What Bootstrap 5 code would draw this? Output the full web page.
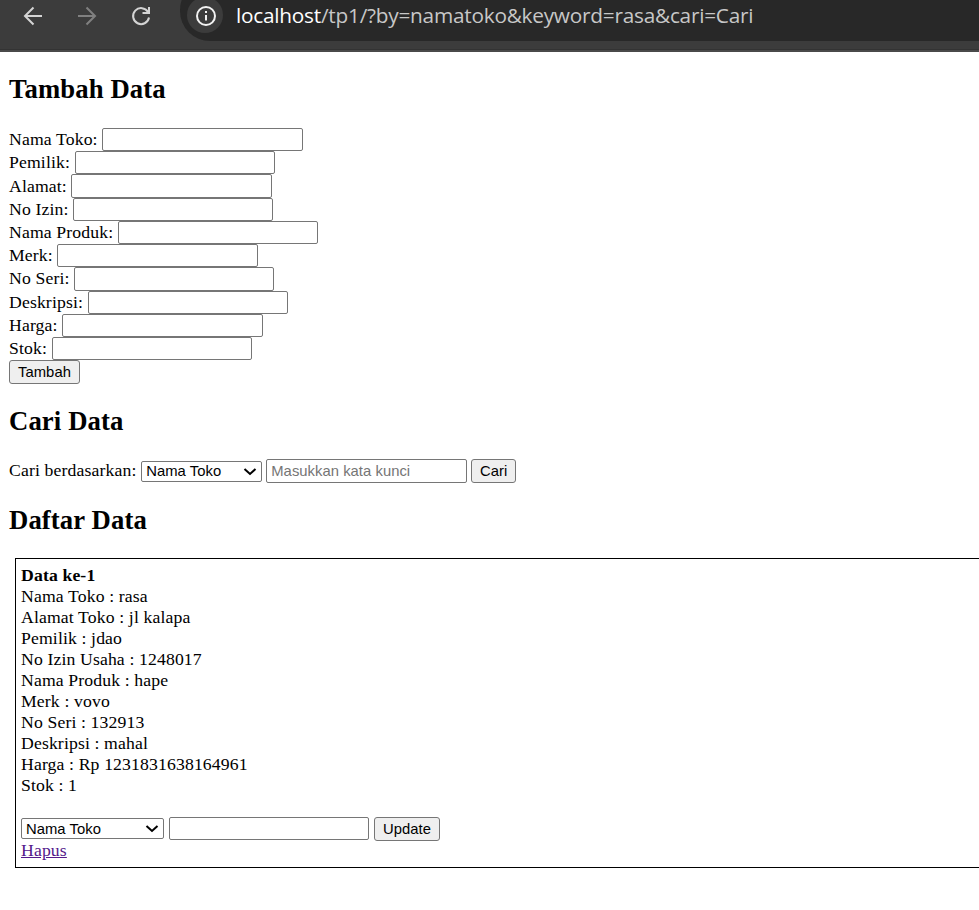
<!DOCTYPE html>
<html lang="id">
<head>
<meta charset="utf-8">
<meta name="viewport" content="width=device-width, initial-scale=1">
<title>Data Toko</title>
<link href="https://cdn.jsdelivr.net/npm/bootstrap@5.3.0/dist/css/bootstrap.min.css" rel="stylesheet">
<style>
body{font-family:"Liberation Serif","Times New Roman",serif;font-size:17.7px;letter-spacing:.13px;line-height:21px;color:#000;background:#fff}
.browser-bar{height:52px;background:#3c3c3c;border-bottom:2px solid #4a4a4a;box-shadow:inset 0 -1px #333}
.nav-icons{width:180px;height:32px}
.nav-icons svg,.site-info svg{display:block}
.address{height:61px;margin-top:-20px;background:#282828;border-radius:30px 0 0 30px;padding:13px 0 0 7px}
.site-info{width:36px;height:36px;background:#3c3c3c;margin-top:4px}
.url{font-family:"Open Sans","Noto Sans",sans-serif;font-size:20.8px;line-height:28px;letter-spacing:-.24px;color:#c7c7c7;margin:8px 0 0 13px}
.url b{font-weight:400;color:#fff}
.page-body{padding:0 0 0 9px}
.title{font-size:26.7px;letter-spacing:.12px;line-height:30px;font-weight:700;margin:0}
.add-title{padding-top:22px}
.add-form{margin-top:24px}
.field-row{height:23.22px;gap:4.6px}
.ctl{font-family:"Liberation Sans",Arial,sans-serif;font-size:14.8px;letter-spacing:.04px;line-height:17px;border:1px solid #767676;border-radius:2px;background:#fff;color:#000}
.txt{width:200.4px;height:23.25px;padding:1px 4px}
.txt::placeholder{color:#757575;opacity:1}
.push{background:#efefef;border-radius:3px;height:24px;padding:1px 0 0}
.add-btn{width:71px;margin-top:-.2px}
.find-btn{width:45px}
.upd-btn{width:66px}
.pick{height:21px;padding:1px 4px 0}
.pick-box select{appearance:none;width:100%}
.chevron{position:absolute;right:5px;top:6px;pointer-events:none}
.search-title{margin-top:22px}
.search-form{height:23px;margin-top:23.6px;gap:4px}
.search-form label{margin:-1px .8px 0 0}
.search-form .txt{width:201px}
.by-pick{width:121px}
.list-title{margin-top:22.5px}
.record{margin:23px 0 0 6px;border:1px solid #000;border-right:0;height:310px;padding:6px 5px}
.update-form{height:23px;margin-top:21px;gap:5px}
.update-form .txt{width:200px}
.upd-pick{width:143px}
.del{color:#551a8b}
</style>
<script src="https://cdn.jsdelivr.net/npm/bootstrap@5.3.0/dist/js/bootstrap.bundle.min.js"></script>
</head>
<body class="overflow-hidden">
<header class="browser-bar d-flex overflow-hidden">
  <div class="nav-icons flex-shrink-0">
    <svg width="180" height="32" fill="none" stroke-width="2">
      <path d="M42 16H25M33.500 7.500L25 16l8.500 8.500" stroke="#d4d4d4"/>
      <path d="M78 16h17M86.500 7.500L95 16l-8.500 8.500" stroke="#808080"/>
      <path d="M148 12A8 8 0 1 0 149 17.500M149 7v6h-6.500" stroke="#d4d4d4"/>
    </svg>
  </div>
  <div class="address d-flex flex-grow-1">
    <div class="site-info rounded-circle flex-shrink-0 d-flex justify-content-center">
      <svg width="36" height="36" fill="none" stroke="#f2f2f2" stroke-width="2"><circle cx="19" cy="19" r="9"/><path d="M19 18v5.500M19 14v2"/></svg>
    </div>
    <div class="url text-nowrap"><b>localhost</b>/tp1/?by=namatoko&amp;keyword=rasa&amp;cari=Cari</div>
  </div>
</header>
<main class="page-body">
  <h2 class="title add-title">Tambah Data</h2>
  <form class="add-form">
    <div class="field-row d-flex align-items-center"><label for="f1">Nama Toko:</label><input id="f1" class="ctl txt"></div>
    <div class="field-row d-flex align-items-center"><label for="f2">Pemilik:</label><input id="f2" class="ctl txt"></div>
    <div class="field-row d-flex align-items-center"><label for="f3">Alamat:</label><input id="f3" class="ctl txt"></div>
    <div class="field-row d-flex align-items-center"><label for="f4">No Izin:</label><input id="f4" class="ctl txt"></div>
    <div class="field-row d-flex align-items-center"><label for="f5">Nama Produk:</label><input id="f5" class="ctl txt"></div>
    <div class="field-row d-flex align-items-center"><label for="f6">Merk:</label><input id="f6" class="ctl txt"></div>
    <div class="field-row d-flex align-items-center"><label for="f7">No Seri:</label><input id="f7" class="ctl txt"></div>
    <div class="field-row d-flex align-items-center"><label for="f8">Deskripsi:</label><input id="f8" class="ctl txt"></div>
    <div class="field-row d-flex align-items-center"><label for="f9">Harga:</label><input id="f9" class="ctl txt"></div>
    <div class="field-row d-flex align-items-center"><label for="f10">Stok:</label><input id="f10" class="ctl txt"></div>
    <button type="button" class="ctl push d-block add-btn">Tambah</button>
  </form>
  <h2 class="title search-title">Cari Data</h2>
  <form class="search-form d-flex align-items-center">
    <label for="by">Cari berdasarkan:</label>
    <div class="pick-box by-pick position-relative d-flex">
      <select id="by" class="ctl pick"><option>Nama Toko</option></select>
      <svg class="chevron" width="14" height="10" fill="none" stroke="#000" stroke-width="2"><path d="M1.500 2L7 7 12.500 2"/></svg>
    </div>
    <input class="ctl txt" placeholder="Masukkan kata kunci">
    <button type="button" class="ctl push find-btn">Cari</button>
  </form>
  <h2 class="title list-title">Daftar Data</h2>
  <section class="record">
    <div class="fw-bold">Data ke-1</div>
    <div>Nama Toko : rasa</div>
    <div>Alamat Toko : jl kalapa</div>
    <div>Pemilik : jdao</div>
    <div>No Izin Usaha : 1248017</div>
    <div>Nama Produk : hape</div>
    <div>Merk : vovo</div>
    <div>No Seri : 132913</div>
    <div>Deskripsi : mahal</div>
    <div>Harga : Rp 1231831638164961</div>
    <div>Stok : 1</div>
    <form class="update-form d-flex align-items-center">
      <div class="pick-box upd-pick position-relative d-flex">
        <select class="ctl pick"><option>Nama Toko</option></select>
        <svg class="chevron" width="14" height="10" fill="none" stroke="#000" stroke-width="2"><path d="M1.500 2L7 7 12.500 2"/></svg>
      </div>
      <input class="ctl txt">
      <button type="button" class="ctl push upd-btn">Update</button>
    </form>
    <a href="#" class="del">Hapus</a>
  </section>
</main>
</body>
</html>
